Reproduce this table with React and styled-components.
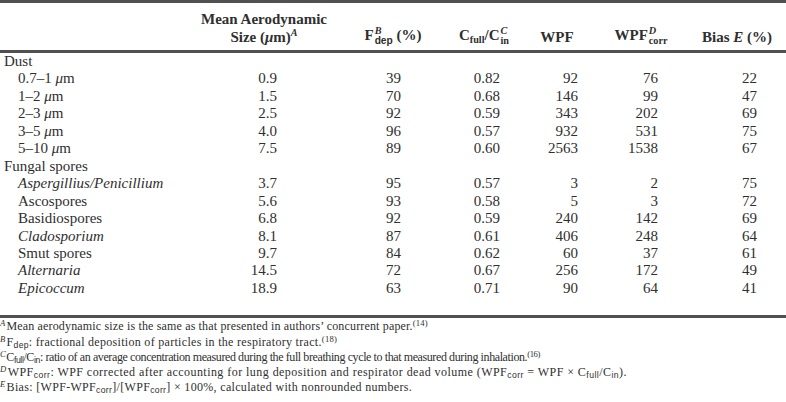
import React from 'react'
import styled, { createGlobalStyle } from 'styled-components'

const GlobalStyle = createGlobalStyle`
  html, body { margin: 0; padding: 0; background: #fff; }
  body {
    font-family: "Liberation Serif", "Times New Roman", serif;
    color: #2f2f2f;
  }
`

// column widths, header shift and right padding of the numbers
const columns = [
  { w: 200 },
  { w: 128, pr: 51 },
  { w: 130, pr: 57 },
  { w: 52, pr: 10 },
  { w: 94, pr: 26 },
  { w: 74, pr: 20 },
  { w: 108, pr: 29, shift: 10 },
]

const dust = [
  ['0.7–1', '0.9', '39', '0.82', '92', '76', '22'],
  ['1–2', '1.5', '70', '0.68', '146', '99', '47'],
  ['2–3', '2.5', '92', '0.59', '343', '202', '69'],
  ['3–5', '4.0', '96', '0.57', '932', '531', '75'],
  ['5–10', '7.5', '89', '0.60', '2563', '1538', '67'],
]

const fungal = [
  ['Aspergillius/Penicillium', true, '3.7', '95', '0.57', '3', '2', '75'],
  ['Ascospores', false, '5.6', '93', '0.58', '5', '3', '72'],
  ['Basidiospores', false, '6.8', '92', '0.59', '240', '142', '69'],
  ['Cladosporium', true, '8.1', '87', '0.61', '406', '248', '64'],
  ['Smut spores', false, '9.7', '84', '0.62', '60', '37', '61'],
  ['Alternaria', true, '14.5', '72', '0.67', '256', '172', '49'],
  ['Epicoccum', true, '18.9', '63', '0.71', '90', '64', '41'],
]

export default function App() {
  return (
    <>
      <GlobalStyle />
      <Page>
        <Table>
          <colgroup>
            {columns.map((c, i) => (
              <col key={i} style={{ width: c.w }} />
            ))}
          </colgroup>
          <thead>
            <HeadRow>
              <HeadCell />
              <HeadCell>
                Mean Aerodynamic
                <br />
                Size (<Mu>μ</Mu>m)<Sup>A</Sup>
              </HeadCell>
              <HeadCell>
                F
                <Scripts>
                  <Up>B</Up>
                  <Down $sans>dep</Down>
                </Scripts>{' '}
                (%)
              </HeadCell>
              <HeadCell>
                C<Sub>full</Sub>/C
                <Scripts>
                  <Up>C</Up>
                  <Down>in</Down>
                </Scripts>
              </HeadCell>
              <HeadCell>WPF</HeadCell>
              <HeadCell>
                WPF
                <Scripts>
                  <Up>D</Up>
                  <Down>corr</Down>
                </Scripts>
              </HeadCell>
              <HeadCell $shift={columns[6].shift}>
                Bias <i>E</i> (%)
              </HeadCell>
            </HeadRow>
          </thead>
          <Body>
            <tr>
              <Label>Dust</Label>
              <Value colSpan={6} />
            </tr>
            {dust.map((r) => (
              <tr key={r[0]}>
                <Label $indent>
                  {r[0]} <Mu>μ</Mu>m
                </Label>
                {r.slice(1).map((v, i) => (
                  <Value key={i} $pr={columns[i + 1].pr}>
                    {v}
                  </Value>
                ))}
              </tr>
            ))}
            <tr>
              <Label>Fungal spores</Label>
              <Value colSpan={6} />
            </tr>
            {fungal.map((r) => (
              <tr key={r[0]}>
                <Label $indent $italic={r[1]}>
                  {r[0]}
                </Label>
                {r.slice(2).map((v, i) => (
                  <Value key={i} $pr={columns[i + 1].pr}>
                    {v}
                  </Value>
                ))}
              </tr>
            ))}
          </Body>
        </Table>

        <Notes>
          <Note $spacing={0.16}>
            <Mark>A</Mark>Mean aerodynamic size is the same as that presented in authors’ concurrent paper.
            <Ref>(14)</Ref>
          </Note>
          <Note $spacing={0.3}>
            <Mark>B</Mark>F<SansSub>dep</SansSub>: fractional deposition of particles in the respiratory tract.
            <Ref>(18)</Ref>
          </Note>
          <Note $spacing={-0.4}>
            <Mark>C</Mark>C<SansSub>full</SansSub>/C<SansSub>in</SansSub>: ratio of an average concentration
            measured during the full breathing cycle to that measured during inhalation.<Ref>(16)</Ref>
          </Note>
          <Note $spacing={0.45}>
            <Mark>D</Mark>WPF<SansSub>corr</SansSub>: WPF corrected after accounting for lung deposition and
            respirator dead volume (WPF<SansSub>corr</SansSub> = WPF × C<SansSub>full</SansSub>/C
            <SansSub>in</SansSub>).
          </Note>
          <Note $spacing={0.32}>
            <Mark>E</Mark>Bias: [WPF-WPF<SansSub>corr</SansSub>]/[WPF<SansSub>corr</SansSub>] × 100%, calculated
            with nonrounded numbers.
          </Note>
        </Notes>
      </Page>
    </>
  )
}

const Page = styled.div`
  width: 786px;
  height: 402px;
  overflow: hidden;
`

const Table = styled.table`
  width: 786px;
  border-collapse: collapse;
  table-layout: fixed;
  border-top: 3px solid #505050;
  border-bottom: 3px solid #505050;
  font-size: 15px;
`

const HeadRow = styled.tr`
  border-bottom: 3px solid #505050;
`

const HeadCell = styled.th`
  font-weight: bold;
  text-align: center;
  vertical-align: bottom;
  line-height: 17.5px;
  padding: 8px 0 4px ${(p) => p.$shift || 0}px;
  white-space: nowrap;
`

const Mu = styled.i``

const Sup = styled.sup`
  font-style: italic;
  font-size: 0.68em;
  line-height: 0;
  vertical-align: 0.55em;
`

const Sub = styled.sub`
  font-size: 0.68em;
  line-height: 0;
  vertical-align: -0.3em;
`

const Scripts = styled.span`
  display: inline-flex;
  flex-direction: column;
  align-items: flex-start;
  font-size: 0.68em;
  line-height: 1;
  vertical-align: 0.55em;
  margin-left: 1px;
`

const Up = styled.span`
  font-style: italic;
`

const Down = styled.span`
  font-family: ${(p) => (p.$sans ? '"Liberation Sans", Arial, sans-serif' : 'inherit')};
`

const Body = styled.tbody`
  td {
    line-height: 17.45px;
    padding-top: 0;
    padding-bottom: 0;
  }
  tr:last-child td {
    padding-bottom: 18px;
  }
`

const Label = styled.td`
  white-space: nowrap;
  padding-left: ${(p) => (p.$indent ? 18 : 4)}px;
  font-style: ${(p) => (p.$italic ? 'italic' : 'normal')};
`

const Value = styled.td`
  text-align: right;
  padding-right: ${(p) => p.$pr || 0}px;
`

const Notes = styled.div`
  padding-top: 1px;
  font-size: 12px;
  line-height: 15.25px;
`

const Note = styled.div`
  white-space: nowrap;
  letter-spacing: ${(p) => p.$spacing || 0}px;
`

const Mark = styled.sup`
  font-style: italic;
  font-size: 0.72em;
  line-height: 0;
  vertical-align: 0.45em;
  margin-right: 1px;
`

const Ref = styled.sup`
  font-size: 0.72em;
  line-height: 0;
  vertical-align: 0.5em;
`

const SansSub = styled.sub`
  font-family: "Liberation Sans", Arial, sans-serif;
  font-size: 0.72em;
  line-height: 0;
  vertical-align: -0.2em;
`
